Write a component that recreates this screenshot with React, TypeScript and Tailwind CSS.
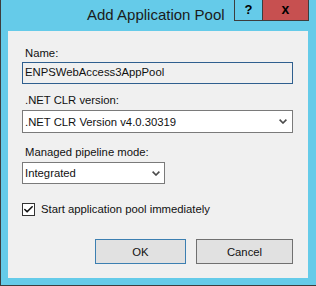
import { Check } from 'lucide-react'

const font = { fontFamily: '"Liberation Sans", Arial, sans-serif' }

function Chevron() {
  return (
    <svg width="8" height="5" viewBox="0 0 8 5" className="shrink-0">
      <polyline points="0.6,0.6 4,4 7.4,0.6" fill="none" stroke="#4a4a4a" strokeWidth="1.6" />
    </svg>
  )
}

function Label({ children, className = '' }: { children: React.ReactNode; className?: string }) {
  return <div className={`h-[14px] pl-[3px] text-[11.3px] leading-[14px] text-[#111] ${className}`}>{children}</div>
}

function Select({ value, className = '', pt = 'pt-[4px]', pr = 'pr-[6px]' }: { value: string; className?: string; pt?: string; pr?: string }) {
  return (
    <div className={`flex items-start justify-between border border-[#7a7a7a] bg-white pl-[2px] ${pr} ${className}`}>
      <span className={`${pt} text-[11.3px] leading-[14px] text-[#111]`}>{value}</span>
      <span className="self-center"><Chevron /></span>
    </div>
  )
}

export default function App() {
  return (
    <div style={font} className="flex h-[286px] w-[316px] flex-col border-b border-l border-[#3d3d3d] bg-[#65cbe9]">
      {/* title bar */}
      <div className="flex h-[31px] shrink-0 items-start">
        <div className="flex-1 pl-[86px] pt-[6px] text-[15px] leading-[17px] text-[#1b1b1b]">Add Application Pool</div>
        <div className="flex h-[21px] w-[29px] items-center justify-center border-x border-b border-[#3d3d3d] text-[13px] font-bold text-black">?</div>
        <div className="mr-[7px] flex h-[21px] w-[46px] items-center justify-center border-b border-r border-[#3d3d3d] bg-[#c75050] pb-[2px] text-[14px] font-bold text-black">x</div>
      </div>

      {/* client area */}
      <div className="ml-[7px] flex h-[247px] w-[300px] flex-col bg-[#f0f0f0] pl-[14px] pr-[15px] pt-[15px]">
        <Label>Name:</Label>
        <div className="mt-[2px] h-[22px] border border-[#2f5f8f] bg-[#f0f0f0] pl-[2px] pt-[2px] text-[11.3px] leading-[14px] text-[#111]">
          ENPSWebAccess3AppPool
        </div>

        <Label className="mt-[9px]">.NET CLR version:</Label>
        <Select value=".NET CLR Version v4.0.30319" className="mt-[3px] h-[23px]" pt="pt-[4px]" pr="pr-[5px]" />

        <Label className="mt-[12px]">Managed pipeline mode:</Label>
        <Select value="Integrated" className="mt-[3px] h-[22px] w-[143px]" pt="pt-[3px]" pr="pr-[4px]" />

        <div className="mt-[18px] flex items-start">
          <div className="mt-[1px] flex h-[13px] w-[13px] items-center justify-center border border-[#333] bg-white">
            <Check size={11} strokeWidth={3.5} color="#111" />
          </div>
          <span className="ml-[6px] text-[11.3px] leading-[14px] text-[#111]">Start application pool immediately</span>
        </div>

        <div className="mt-[23px] flex justify-end gap-[10px]">
          <button className="h-[25px] w-[91px] border border-[#3c7fb1] bg-[#e1e1e1] pt-[1px] text-[11.3px] leading-[14px] text-[#111]">OK</button>
          <button className="h-[25px] w-[97px] border border-[#707070] bg-[#e1e1e1] pt-[1px] text-[11.3px] leading-[14px] text-[#111]">Cancel</button>
        </div>
      </div>
    </div>
  )
}
